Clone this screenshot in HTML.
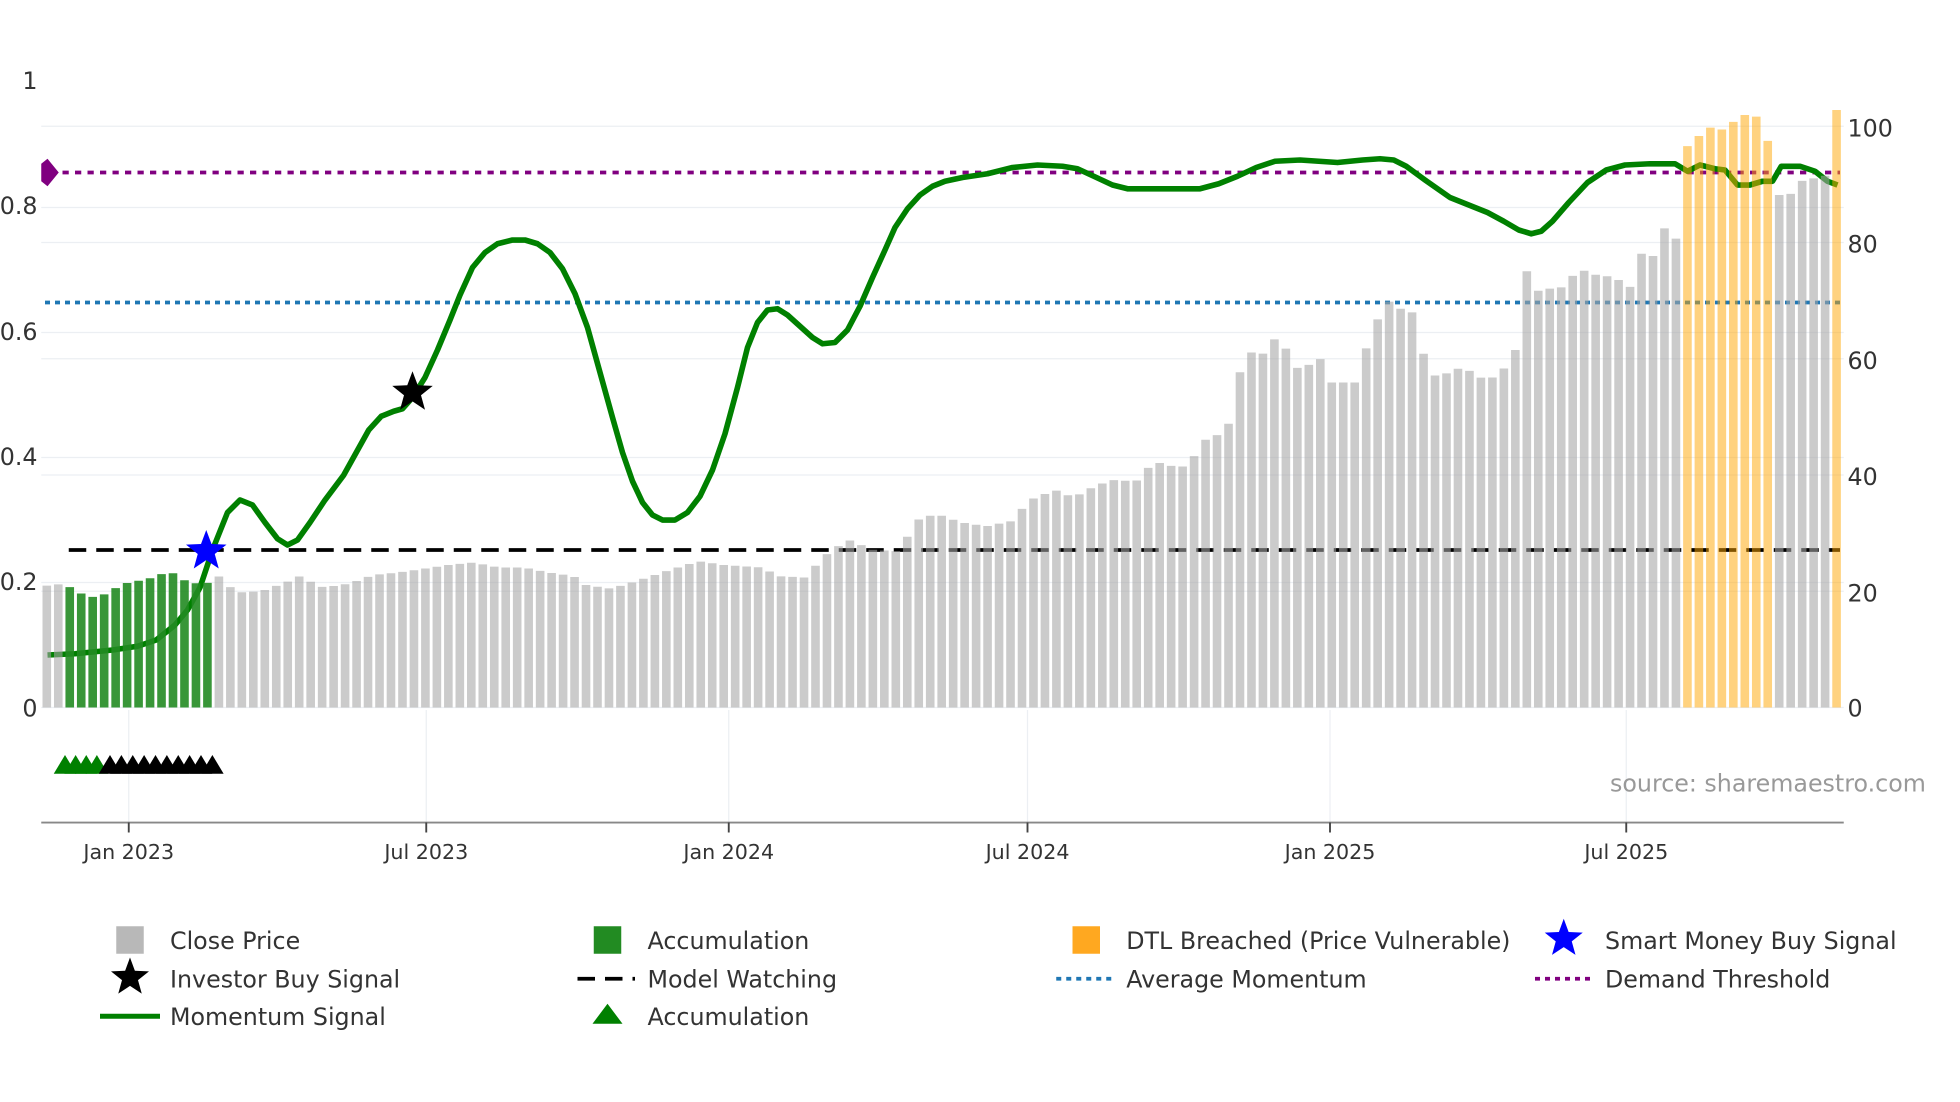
<!DOCTYPE html>
<html><head><meta charset="utf-8"><style>
html,body{margin:0;padding:0;background:#fff;}
svg{display:block;font-family:"DejaVu Sans","Liberation Sans",sans-serif;}
</style></head><body>
<svg id="s" width="1960" height="1102" viewBox="0 0 1568 881.6" xmlns="http://www.w3.org/2000/svg">
<g stroke="#eceff3" stroke-width="1">
<line x1="33" x2="1475" y1="466" y2="466"/><line x1="33" x2="1475" y1="366" y2="366"/><line x1="33" x2="1475" y1="266" y2="266"/><line x1="33" x2="1475" y1="166" y2="166"/>
<line x1="33" x2="1475" y1="473" y2="473"/><line x1="33" x2="1475" y1="380" y2="380"/><line x1="33" x2="1475" y1="287" y2="287"/><line x1="33" x2="1475" y1="194" y2="194"/><line x1="33" x2="1475" y1="101" y2="101"/>
<line x1="33" x2="1475" y1="566" y2="566"/>
<line x1="103" x2="103" y1="568" y2="658"/><line x1="341" x2="341" y1="568" y2="658"/><line x1="583" x2="583" y1="568" y2="658"/><line x1="822" x2="822" y1="568" y2="658"/><line x1="1064" x2="1064" y1="568" y2="658"/><line x1="1301" x2="1301" y1="568" y2="658"/>
</g>
<line x1="55" x2="1472" y1="440" y2="440" stroke="#000" stroke-width="3" stroke-dasharray="14,8"/>
<line x1="40" x2="1472" y1="138" y2="138" stroke="#800080" stroke-width="3" stroke-dasharray="5,5"/>
<line x1="36" x2="1472" y1="242" y2="242" stroke="#1f77b4" stroke-width="3" stroke-dasharray="4,4"/>
<path id="mom" fill="none" stroke="#008000" stroke-width="4.5" stroke-linejoin="round"/>
<g id="bars"></g>
<path d="M33 131 L38 127 L47 138 L38 149 L33 145Z" fill="#800080"/>
<g id="tri"></g>
<polygon id="bstar" fill="#0000ff"/>
<polygon id="kstar" fill="#000"/>
<line x1="33" x2="1475" y1="658" y2="658" stroke="#888" stroke-width="1.5"/>
<g stroke="#444" stroke-width="1.5">
<line x1="103" x2="103" y1="658" y2="666"/><line x1="341" x2="341" y1="658" y2="666"/><line x1="583" x2="583" y1="658" y2="666"/><line x1="822" x2="822" y1="658" y2="666"/><line x1="1064" x2="1064" y1="658" y2="666"/><line x1="1301" x2="1301" y1="658" y2="666"/>
</g>
<g fill="#333" font-size="16.5" text-anchor="middle">
<text x="103" y="687">Jan 2023</text><text x="341" y="687">Jul 2023</text><text x="583" y="687">Jan 2024</text><text x="822" y="687">Jul 2024</text><text x="1064" y="687">Jan 2025</text><text x="1301" y="687">Jul 2025</text>
</g>
<g fill="#333" font-size="19" text-anchor="end">
<text x="30" y="71">1</text><text x="30" y="171">0.8</text><text x="30" y="272">0.6</text><text x="30" y="372">0.4</text><text x="30" y="472">0.2</text><text x="30" y="573">0</text>
</g>
<g fill="#333" font-size="19">
<text x="1478" y="109">100</text><text x="1478" y="202">80</text><text x="1478" y="295">60</text><text x="1478" y="388">40</text><text x="1478" y="481">20</text><text x="1478" y="573">0</text>
</g>
<text x="1288" y="633" font-size="19" fill="#999">source: sharemaestro.com</text>
<g font-size="19" fill="#333">
<rect x="93" y="741" width="22" height="22" fill="#b8b8b8"/><text x="136" y="759">Close Price</text>
<polygon id="lstar" fill="#000"/><text x="136" y="790">Investor Buy Signal</text>
<line x1="80" x2="128" y1="813" y2="813" stroke="#008000" stroke-width="4"/><text x="136" y="820">Momentum Signal</text>
<rect x="475" y="741" width="22" height="22" fill="#228b22"/><text x="518" y="759">Accumulation</text>
<line x1="462" x2="508" y1="783" y2="783" stroke="#000" stroke-width="3" stroke-dasharray="14,8"/><text x="518" y="790">Model Watching</text>
<polygon points="474,819 498,819 486,803" fill="#008000"/><text x="518" y="820">Accumulation</text>
<rect x="858" y="741" width="22" height="22" fill="#ffa820"/><text x="901" y="759">DTL Breached (Price Vulnerable)</text>
<line x1="845" x2="891" y1="783" y2="783" stroke="#1f77b4" stroke-width="3" stroke-dasharray="4,4"/><text x="901" y="790">Average Momentum</text>
<polygon id="lbstar" fill="#0000ff"/><text x="1284" y="759">Smart Money Buy Signal</text>
<line x1="1228" x2="1274" y1="783" y2="783" stroke="#800080" stroke-width="3" stroke-dasharray="4,4"/><text x="1284" y="790">Demand Threshold</text>
</g>
</svg>
<script>
(function(){
function star(cx,cy,R){var r=R*0.42,p=[];for(var i=0;i<10;i++){var a=-Math.PI/2+i*Math.PI/5,rr=i%2?r:R;p.push((cx+rr*Math.cos(a)).toFixed(1)+','+(cy+rr*Math.sin(a)).toFixed(1));}return p.join(' ');}
document.getElementById('bstar').setAttribute('points',star(165,441,17));
document.getElementById('kstar').setAttribute('points',star(330,314,17));
document.getElementById('lstar').setAttribute('points',star(104,782,16));
document.getElementById('lbstar').setAttribute('points',star(1251,751,16));
var m=[[38,524],[60,523],[90,520],[110,517],[125,512],[140,500],[150,488],[160,470],[170,440],[182,410],[192,400],[202,404],[212,418],[222,431],[230,436],[238,432],[248,418],[260,400],[275,380],[285,362],[295,344],[305,333],[315,329],[322,327],[330,318],[340,302],[350,280],[360,256],[368,236],[378,214],[388,202],[398,195],[410,192],[420,192],[430,195],[440,202],[450,215],[460,235],[470,262],[480,298],[490,334],[498,362],[506,385],[514,402],[522,412],[530,416],[540,416],[550,410],[560,397],[570,376],[580,347],[590,310],[598,278],[606,258],[614,248],[622,247],[630,252],[640,261],[650,270],[658,275],[668,274],[678,264],[688,245],[698,222],[708,200],[716,182],[726,167],[736,156],[746,149],[756,145],[770,142],[790,139],[810,134],[830,132],[850,133],[862,135],[875,141],[890,148],[902,151],[920,151],[940,151],[960,151],[975,147],[990,141],[1005,134],[1020,129],[1040,128],[1070,130],[1090,128],[1104,127],[1115,128],[1125,133],[1140,144],[1160,158],[1175,164],[1190,170],[1203,177],[1215,184],[1225,187],[1233,185],[1242,177],[1255,162],[1270,146],[1285,136],[1300,132],[1320,131],[1340,131],[1345,134],[1350,137],[1360,132],[1372,135],[1380,136],[1390,148],[1400,148],[1410,145],[1418,145],[1425,133],[1440,133],[1452,137],[1462,145],[1470,148]];
document.getElementById('mom').setAttribute('d','M'+m.map(function(p){return p.join(' ')}).join(' L'));
var k=[[34,469],[52,467],[70,477],[80,478],[100,467],[120,463],[137,457],[150,465],[165,468],[175,460],[190,474],[210,473],[230,466],[240,461],[260,470],[280,467],[300,460],[320,458],[340,455],[360,452],[380,450],[400,454],[420,454],[440,458],[460,461],[470,468],[490,471],[510,465],[540,455],[560,449],[580,452],[610,454],[625,461],[645,462],[655,451],[665,441],[680,432],[700,440],[720,441],[735,416],[750,411],[770,418],[790,421],[810,417],[825,400],[845,392],[860,398],[875,390],[890,384],[910,385],[920,374],[930,370],[945,375],[955,367],[965,352],[975,348],[985,338],[993,298],[1002,282],[1012,283],[1020,271],[1030,279],[1040,296],[1050,291],[1058,287],[1066,306],[1085,306],[1095,276],[1103,256],[1112,241],[1120,247],[1130,247],[1140,283],[1150,302],[1160,298],[1170,294],[1180,298],[1190,305],[1200,299],[1206,293],[1214,279],[1222,216],[1232,233],[1240,231],[1250,230],[1260,220],[1270,216],[1280,221],[1290,221],[1298,225],[1306,230],[1315,201],[1324,205],[1333,182],[1342,191],[1351,117],[1360,109],[1369,102],[1378,104],[1387,98],[1397,92],[1406,93],[1415,111],[1424,156],[1433,156],[1442,145],[1451,142],[1460,148],[1470,88]];
function topAt(x){if(x<=k[0][0])return k[0][1];for(var i=1;i<k.length;i++){if(x<=k[i][0]){var a=k[i-1],b=k[i];return a[1]+(b[1]-a[1])*(x-a[0])/(b[0]-a[0]);}}return k[k.length-1][1];}
var NS='http://www.w3.org/2000/svg';
var N=157,p=(1475-34)/N,g=document.getElementById('bars');
for(var i=0;i<N;i++){var x=34+i*p,c=x+p/2,t=topAt(c),col='#a6a6a6',op=0.58;
if(i>=2&&i<=14){col='#228b22';op=0.9;}
if((i>=143&&i<=150)||i==156){col='#ffa500';op=0.5;}
var r=document.createElementNS(NS,'rect');
r.setAttribute('x',x.toFixed(2));r.setAttribute('y',t.toFixed(1));r.setAttribute('width',(p*0.75).toFixed(2));r.setAttribute('height',(566-t).toFixed(1));r.setAttribute('fill',col);r.setAttribute('fill-opacity',op);
g.appendChild(r);}
var tg=document.getElementById('tri');
function tri(cx,col){var q=document.createElementNS(NS,'polygon');q.setAttribute('points',(cx-9)+',619 '+(cx+9)+',619 '+cx+',604');q.setAttribute('fill',col);tg.appendChild(q);}
for(var j=0;j<4;j++)tri(52+j*8.5,'#008000');
for(var j=0;j<10;j++)tri(88+j*9.1,'#000');
})();
</script>
</body></html>
